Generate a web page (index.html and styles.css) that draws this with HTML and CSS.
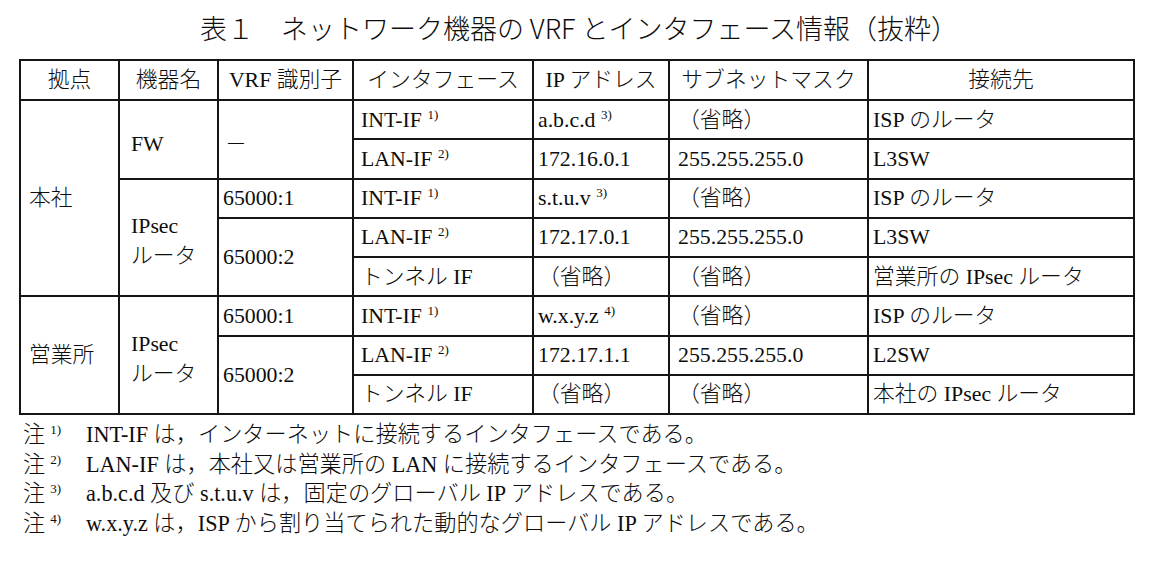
FILE: index.html
```html
<!DOCTYPE html>
<html lang="ja">
<head>
<meta charset="utf-8">
<title>表１ ネットワーク機器の VRF とインタフェース情報（抜粋）</title>
<link rel="stylesheet" href="styles.css">
</head>
<body>
<div class="page">
  <h1 class="title">表１　ネットワーク機器の VRF とインタフェース情報（抜粋）</h1>
  <table class="vrf">
    <colgroup>
      <col class="c-site">
      <col class="c-dev">
      <col class="c-vrf">
      <col class="c-if">
      <col class="c-ip">
      <col class="c-mask">
      <col class="c-dest">
    </colgroup>
    <thead>
      <tr>
        <th>拠点</th>
        <th>機器名</th>
        <th>VRF 識別子</th>
        <th>インタフェース</th>
        <th>IP アドレス</th>
        <th>サブネットマスク</th>
        <th>接続先</th>
      </tr>
    </thead>
    <tbody>
      <tr>
        <td rowspan="5" class="k">本社</td>
        <td rowspan="2" class="d low">FW</td>
        <td rowspan="2" class="v low dash">－</td>
        <td class="i">INT-IF <sup class="sp">1)</sup></td>
        <td class="a">a.b.c.d <sup class="sp">3)</sup></td>
        <td class="m">（省略）</td>
        <td class="t">ISP のルータ</td>
      </tr>
      <tr>
        <td class="i">LAN-IF <sup class="sp">2)</sup></td>
        <td class="a">172.16.0.1</td>
        <td class="m">255.255.255.0</td>
        <td class="t">L3SW</td>
      </tr>
      <tr>
        <td rowspan="3" class="d two">IPsec<br>ルータ</td>
        <td class="v">65000:1</td>
        <td class="i">INT-IF <sup class="sp">1)</sup></td>
        <td class="a">s.t.u.v <sup class="sp">3)</sup></td>
        <td class="m">（省略）</td>
        <td class="t">ISP のルータ</td>
      </tr>
      <tr>
        <td rowspan="2" class="v">65000:2</td>
        <td class="i">LAN-IF <sup class="sp">2)</sup></td>
        <td class="a">172.17.0.1</td>
        <td class="m">255.255.255.0</td>
        <td class="t">L3SW</td>
      </tr>
      <tr>
        <td class="i">トンネル IF</td>
        <td class="a">（省略）</td>
        <td class="m">（省略）</td>
        <td class="t">営業所の IPsec ルータ</td>
      </tr>
      <tr>
        <td rowspan="3" class="k">営業所</td>
        <td rowspan="3" class="d two">IPsec<br>ルータ</td>
        <td class="v">65000:1</td>
        <td class="i">INT-IF <sup class="sp">1)</sup></td>
        <td class="a">w.x.y.z <sup class="sp">4)</sup></td>
        <td class="m">（省略）</td>
        <td class="t">ISP のルータ</td>
      </tr>
      <tr>
        <td rowspan="2" class="v">65000:2</td>
        <td class="i">LAN-IF <sup class="sp">2)</sup></td>
        <td class="a">172.17.1.1</td>
        <td class="m">255.255.255.0</td>
        <td class="t">L2SW</td>
      </tr>
      <tr>
        <td class="i">トンネル IF</td>
        <td class="a">（省略）</td>
        <td class="m">（省略）</td>
        <td class="t">本社の IPsec ルータ</td>
      </tr>
    </tbody>
  </table>
  <div class="notes">
    <div class="note"><span class="note-label">注<sup class="sp">1)</sup></span><span class="note-text">INT-IF は，インターネットに接続するインタフェースである。</span></div>
    <div class="note"><span class="note-label">注<sup class="sp">2)</sup></span><span class="note-text">LAN-IF は，本社又は営業所の LAN に接続するインタフェースである。</span></div>
    <div class="note"><span class="note-label">注<sup class="sp">3)</sup></span><span class="note-text">a.b.c.d 及び s.t.u.v は，固定のグローバル IP アドレスである。</span></div>
    <div class="note"><span class="note-label">注<sup class="sp">4)</sup></span><span class="note-text">w.x.y.z は，ISP から割り当てられた動的なグローバル IP アドレスである。</span></div>
  </div>
</div>
</body>
</html>
```

FILE: styles.css
```css
html, body {
  margin: 0;
  padding: 0;
  background: #ffffff;
}

body {
  font-family: "Liberation Serif", "Noto Sans CJK JP Light", "Noto Sans CJK JP", serif;
  font-weight: 400;
  color: #0d0d0d;
}

.page {
  width: 1152px;
  height: 568px;
  overflow: hidden;
}

.title {
  margin: 0;
  padding: 13px 0 0 6px;
  font-family: "Noto Sans CJK JP", sans-serif;
  font-weight: 300;
  font-size: 27px;
  line-height: 30px;
  text-align: center;
  color: #0d0d0d;
}

.vrf {
  margin: 16px 0 0 19px;
  width: 1114px;
  table-layout: fixed;
  border-collapse: collapse;
  font-size: 21.8px;
}

.c-site { width: 99px; }
.c-dev  { width: 99px; }
.c-vrf  { width: 135px; }
.c-if   { width: 180px; }
.c-ip   { width: 136px; }
.c-mask { width: 199px; }
.c-dest { width: 266px; }

.vrf th,
.vrf td {
  border: 2px solid #151515;
  padding: 0 0 0 7px;
  text-align: left;
  vertical-align: middle;
  font-weight: 400;
  line-height: 30px;
  white-space: nowrap;
}

.vrf th {
  height: 38px;
  padding: 0;
  text-align: center;
}

.vrf td {
  height: 37.25px;
}

.vrf td.k { padding-left: 8px; }
.vrf td.d { padding-left: 11px; }
.vrf td.v { padding-left: 4px; }
.vrf td.i { padding-left: 7px; }
.vrf td.a { padding-left: 4px; }
.vrf td.m { padding-left: 8px; }
.vrf td.t { padding-left: 4px; }

.vrf td.low {
  padding-top: 9px;
}

.vrf td.two {
  padding-top: 7px;
}

.vrf td.dash {
  padding-left: 6px;
}

.sp {
  font-size: 13px;
  line-height: 0;
  vertical-align: 8px;
}

.notes {
  margin: 5px 0 0 23px;
  font-size: 22.2px;
  line-height: 29.5px;
}

.note {
  display: flex;
}

.note-label {
  flex: none;
  width: 63px;
}

.note-label .sp {
  margin-left: 5px;
}
```
